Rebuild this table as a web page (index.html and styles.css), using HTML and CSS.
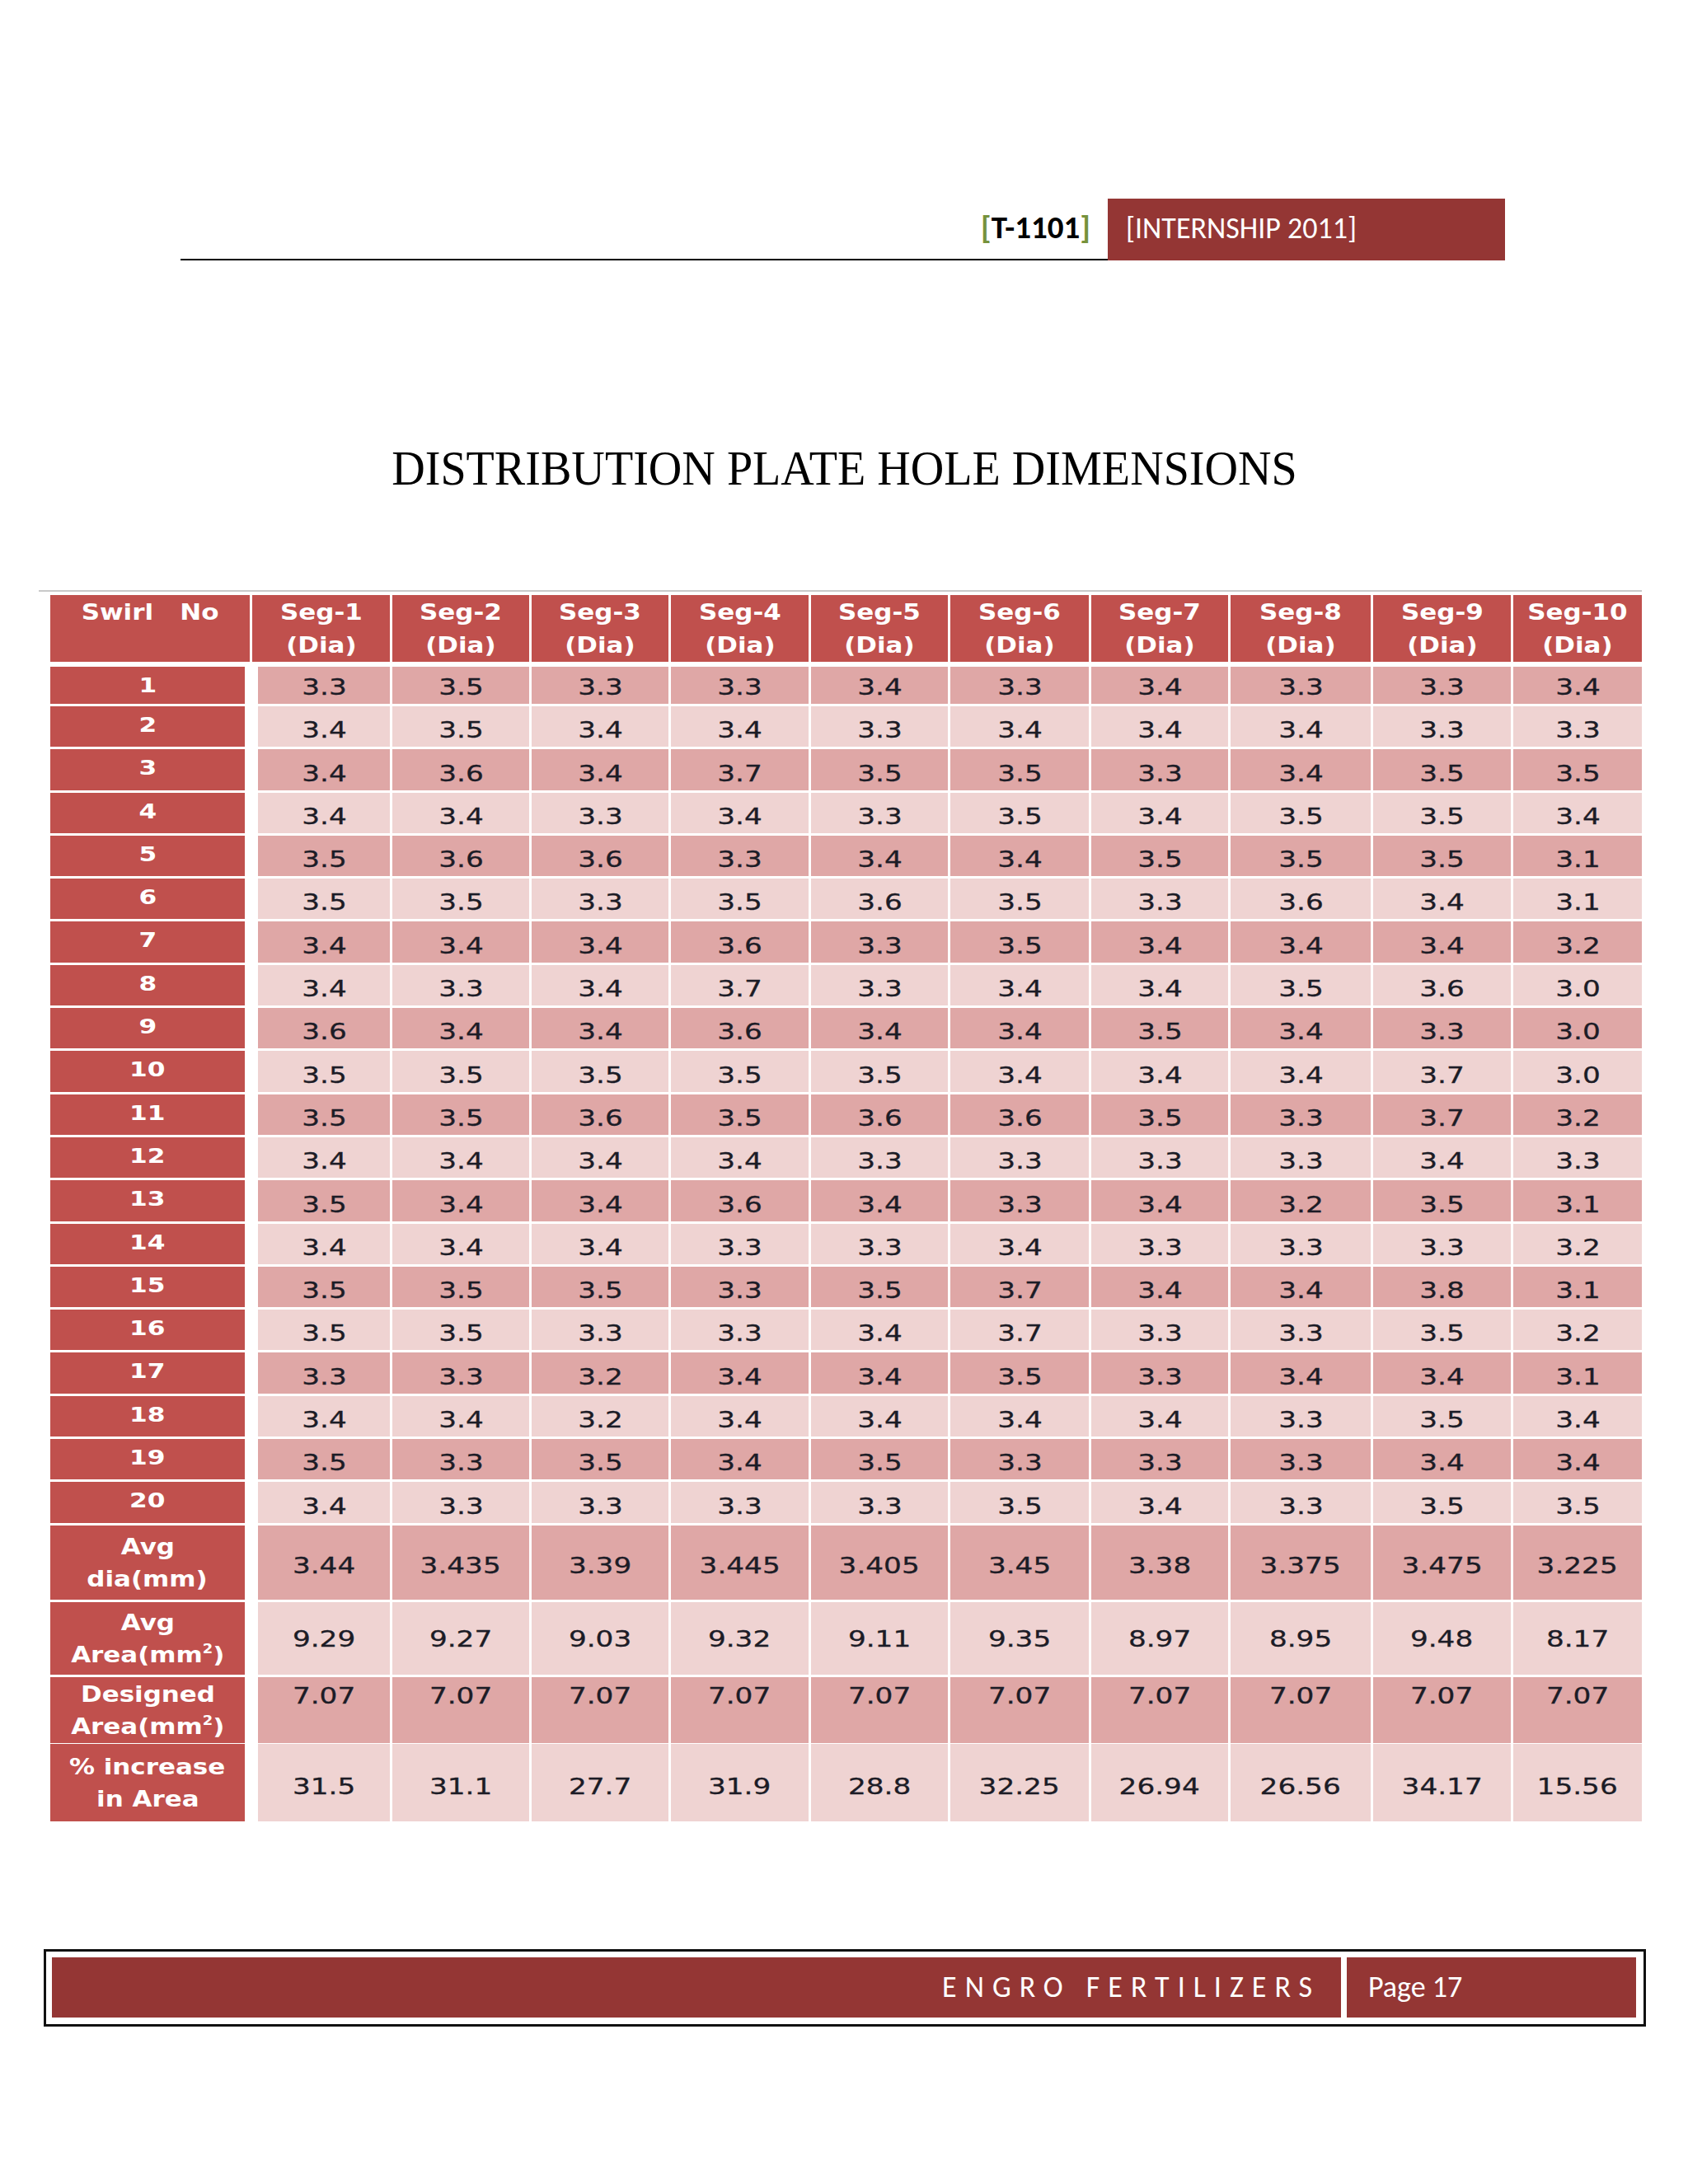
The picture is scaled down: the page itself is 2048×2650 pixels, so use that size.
FILE: index.html
```html
<!DOCTYPE html>
<html>
<head>
<meta charset="utf-8">
<title>Distribution Plate Hole Dimensions</title>
<link rel="stylesheet" href="styles.css">
</head>
<body>
<div class="page">
  <header class="top">
    <div class="top-left"><span class="br">[</span>T-1101<span class="br">]</span></div>
    <div class="top-right">[INTERNSHIP 2011]</div>
  </header>

  <h1 class="title"><span>DISTRIBUTION PLATE HOLE DIMENSIONS</span></h1>

  <section class="tbl">
    <div class="thead">
      <div class="hc"><span class="w">Swirl&nbsp;&nbsp;&nbsp;No</span></div>
      <div class="hc"><span class="w">Seg-1</span><span class="w">(Dia)</span></div>
      <div class="hc"><span class="w">Seg-2</span><span class="w">(Dia)</span></div>
      <div class="hc"><span class="w">Seg-3</span><span class="w">(Dia)</span></div>
      <div class="hc"><span class="w">Seg-4</span><span class="w">(Dia)</span></div>
      <div class="hc"><span class="w">Seg-5</span><span class="w">(Dia)</span></div>
      <div class="hc"><span class="w">Seg-6</span><span class="w">(Dia)</span></div>
      <div class="hc"><span class="w">Seg-7</span><span class="w">(Dia)</span></div>
      <div class="hc"><span class="w">Seg-8</span><span class="w">(Dia)</span></div>
      <div class="hc"><span class="w">Seg-9</span><span class="w">(Dia)</span></div>
      <div class="hc"><span class="w">Seg-10</span><span class="w">(Dia)</span></div>
    </div>

    <div class="tbody">
      <div class="tr r1 dark"><div class="sw"><span class="n">1</span></div><div class="d"><span class="v">3.3</span></div><div class="d"><span class="v">3.5</span></div><div class="d"><span class="v">3.3</span></div><div class="d"><span class="v">3.3</span></div><div class="d"><span class="v">3.4</span></div><div class="d"><span class="v">3.3</span></div><div class="d"><span class="v">3.4</span></div><div class="d"><span class="v">3.3</span></div><div class="d"><span class="v">3.3</span></div><div class="d"><span class="v">3.4</span></div></div>
      <div class="tr light"><div class="sw"><span class="n">2</span></div><div class="d"><span class="v">3.4</span></div><div class="d"><span class="v">3.5</span></div><div class="d"><span class="v">3.4</span></div><div class="d"><span class="v">3.4</span></div><div class="d"><span class="v">3.3</span></div><div class="d"><span class="v">3.4</span></div><div class="d"><span class="v">3.4</span></div><div class="d"><span class="v">3.4</span></div><div class="d"><span class="v">3.3</span></div><div class="d"><span class="v">3.3</span></div></div>
      <div class="tr dark"><div class="sw"><span class="n">3</span></div><div class="d"><span class="v">3.4</span></div><div class="d"><span class="v">3.6</span></div><div class="d"><span class="v">3.4</span></div><div class="d"><span class="v">3.7</span></div><div class="d"><span class="v">3.5</span></div><div class="d"><span class="v">3.5</span></div><div class="d"><span class="v">3.3</span></div><div class="d"><span class="v">3.4</span></div><div class="d"><span class="v">3.5</span></div><div class="d"><span class="v">3.5</span></div></div>
      <div class="tr light"><div class="sw"><span class="n">4</span></div><div class="d"><span class="v">3.4</span></div><div class="d"><span class="v">3.4</span></div><div class="d"><span class="v">3.3</span></div><div class="d"><span class="v">3.4</span></div><div class="d"><span class="v">3.3</span></div><div class="d"><span class="v">3.5</span></div><div class="d"><span class="v">3.4</span></div><div class="d"><span class="v">3.5</span></div><div class="d"><span class="v">3.5</span></div><div class="d"><span class="v">3.4</span></div></div>
      <div class="tr dark"><div class="sw"><span class="n">5</span></div><div class="d"><span class="v">3.5</span></div><div class="d"><span class="v">3.6</span></div><div class="d"><span class="v">3.6</span></div><div class="d"><span class="v">3.3</span></div><div class="d"><span class="v">3.4</span></div><div class="d"><span class="v">3.4</span></div><div class="d"><span class="v">3.5</span></div><div class="d"><span class="v">3.5</span></div><div class="d"><span class="v">3.5</span></div><div class="d"><span class="v">3.1</span></div></div>
      <div class="tr light"><div class="sw"><span class="n">6</span></div><div class="d"><span class="v">3.5</span></div><div class="d"><span class="v">3.5</span></div><div class="d"><span class="v">3.3</span></div><div class="d"><span class="v">3.5</span></div><div class="d"><span class="v">3.6</span></div><div class="d"><span class="v">3.5</span></div><div class="d"><span class="v">3.3</span></div><div class="d"><span class="v">3.6</span></div><div class="d"><span class="v">3.4</span></div><div class="d"><span class="v">3.1</span></div></div>
      <div class="tr dark"><div class="sw"><span class="n">7</span></div><div class="d"><span class="v">3.4</span></div><div class="d"><span class="v">3.4</span></div><div class="d"><span class="v">3.4</span></div><div class="d"><span class="v">3.6</span></div><div class="d"><span class="v">3.3</span></div><div class="d"><span class="v">3.5</span></div><div class="d"><span class="v">3.4</span></div><div class="d"><span class="v">3.4</span></div><div class="d"><span class="v">3.4</span></div><div class="d"><span class="v">3.2</span></div></div>
      <div class="tr light"><div class="sw"><span class="n">8</span></div><div class="d"><span class="v">3.4</span></div><div class="d"><span class="v">3.3</span></div><div class="d"><span class="v">3.4</span></div><div class="d"><span class="v">3.7</span></div><div class="d"><span class="v">3.3</span></div><div class="d"><span class="v">3.4</span></div><div class="d"><span class="v">3.4</span></div><div class="d"><span class="v">3.5</span></div><div class="d"><span class="v">3.6</span></div><div class="d"><span class="v">3.0</span></div></div>
      <div class="tr dark"><div class="sw"><span class="n">9</span></div><div class="d"><span class="v">3.6</span></div><div class="d"><span class="v">3.4</span></div><div class="d"><span class="v">3.4</span></div><div class="d"><span class="v">3.6</span></div><div class="d"><span class="v">3.4</span></div><div class="d"><span class="v">3.4</span></div><div class="d"><span class="v">3.5</span></div><div class="d"><span class="v">3.4</span></div><div class="d"><span class="v">3.3</span></div><div class="d"><span class="v">3.0</span></div></div>
      <div class="tr light"><div class="sw"><span class="n">10</span></div><div class="d"><span class="v">3.5</span></div><div class="d"><span class="v">3.5</span></div><div class="d"><span class="v">3.5</span></div><div class="d"><span class="v">3.5</span></div><div class="d"><span class="v">3.5</span></div><div class="d"><span class="v">3.4</span></div><div class="d"><span class="v">3.4</span></div><div class="d"><span class="v">3.4</span></div><div class="d"><span class="v">3.7</span></div><div class="d"><span class="v">3.0</span></div></div>
      <div class="tr dark"><div class="sw"><span class="n">11</span></div><div class="d"><span class="v">3.5</span></div><div class="d"><span class="v">3.5</span></div><div class="d"><span class="v">3.6</span></div><div class="d"><span class="v">3.5</span></div><div class="d"><span class="v">3.6</span></div><div class="d"><span class="v">3.6</span></div><div class="d"><span class="v">3.5</span></div><div class="d"><span class="v">3.3</span></div><div class="d"><span class="v">3.7</span></div><div class="d"><span class="v">3.2</span></div></div>
      <div class="tr light"><div class="sw"><span class="n">12</span></div><div class="d"><span class="v">3.4</span></div><div class="d"><span class="v">3.4</span></div><div class="d"><span class="v">3.4</span></div><div class="d"><span class="v">3.4</span></div><div class="d"><span class="v">3.3</span></div><div class="d"><span class="v">3.3</span></div><div class="d"><span class="v">3.3</span></div><div class="d"><span class="v">3.3</span></div><div class="d"><span class="v">3.4</span></div><div class="d"><span class="v">3.3</span></div></div>
      <div class="tr dark"><div class="sw"><span class="n">13</span></div><div class="d"><span class="v">3.5</span></div><div class="d"><span class="v">3.4</span></div><div class="d"><span class="v">3.4</span></div><div class="d"><span class="v">3.6</span></div><div class="d"><span class="v">3.4</span></div><div class="d"><span class="v">3.3</span></div><div class="d"><span class="v">3.4</span></div><div class="d"><span class="v">3.2</span></div><div class="d"><span class="v">3.5</span></div><div class="d"><span class="v">3.1</span></div></div>
      <div class="tr light"><div class="sw"><span class="n">14</span></div><div class="d"><span class="v">3.4</span></div><div class="d"><span class="v">3.4</span></div><div class="d"><span class="v">3.4</span></div><div class="d"><span class="v">3.3</span></div><div class="d"><span class="v">3.3</span></div><div class="d"><span class="v">3.4</span></div><div class="d"><span class="v">3.3</span></div><div class="d"><span class="v">3.3</span></div><div class="d"><span class="v">3.3</span></div><div class="d"><span class="v">3.2</span></div></div>
      <div class="tr dark"><div class="sw"><span class="n">15</span></div><div class="d"><span class="v">3.5</span></div><div class="d"><span class="v">3.5</span></div><div class="d"><span class="v">3.5</span></div><div class="d"><span class="v">3.3</span></div><div class="d"><span class="v">3.5</span></div><div class="d"><span class="v">3.7</span></div><div class="d"><span class="v">3.4</span></div><div class="d"><span class="v">3.4</span></div><div class="d"><span class="v">3.8</span></div><div class="d"><span class="v">3.1</span></div></div>
      <div class="tr light"><div class="sw"><span class="n">16</span></div><div class="d"><span class="v">3.5</span></div><div class="d"><span class="v">3.5</span></div><div class="d"><span class="v">3.3</span></div><div class="d"><span class="v">3.3</span></div><div class="d"><span class="v">3.4</span></div><div class="d"><span class="v">3.7</span></div><div class="d"><span class="v">3.3</span></div><div class="d"><span class="v">3.3</span></div><div class="d"><span class="v">3.5</span></div><div class="d"><span class="v">3.2</span></div></div>
      <div class="tr dark"><div class="sw"><span class="n">17</span></div><div class="d"><span class="v">3.3</span></div><div class="d"><span class="v">3.3</span></div><div class="d"><span class="v">3.2</span></div><div class="d"><span class="v">3.4</span></div><div class="d"><span class="v">3.4</span></div><div class="d"><span class="v">3.5</span></div><div class="d"><span class="v">3.3</span></div><div class="d"><span class="v">3.4</span></div><div class="d"><span class="v">3.4</span></div><div class="d"><span class="v">3.1</span></div></div>
      <div class="tr light"><div class="sw"><span class="n">18</span></div><div class="d"><span class="v">3.4</span></div><div class="d"><span class="v">3.4</span></div><div class="d"><span class="v">3.2</span></div><div class="d"><span class="v">3.4</span></div><div class="d"><span class="v">3.4</span></div><div class="d"><span class="v">3.4</span></div><div class="d"><span class="v">3.4</span></div><div class="d"><span class="v">3.3</span></div><div class="d"><span class="v">3.5</span></div><div class="d"><span class="v">3.4</span></div></div>
      <div class="tr dark"><div class="sw"><span class="n">19</span></div><div class="d"><span class="v">3.5</span></div><div class="d"><span class="v">3.3</span></div><div class="d"><span class="v">3.5</span></div><div class="d"><span class="v">3.4</span></div><div class="d"><span class="v">3.5</span></div><div class="d"><span class="v">3.3</span></div><div class="d"><span class="v">3.3</span></div><div class="d"><span class="v">3.3</span></div><div class="d"><span class="v">3.4</span></div><div class="d"><span class="v">3.4</span></div></div>
      <div class="tr light"><div class="sw"><span class="n">20</span></div><div class="d"><span class="v">3.4</span></div><div class="d"><span class="v">3.3</span></div><div class="d"><span class="v">3.3</span></div><div class="d"><span class="v">3.3</span></div><div class="d"><span class="v">3.3</span></div><div class="d"><span class="v">3.5</span></div><div class="d"><span class="v">3.4</span></div><div class="d"><span class="v">3.3</span></div><div class="d"><span class="v">3.5</span></div><div class="d"><span class="v">3.5</span></div></div>

      <div class="tr avg dark"><div class="sw lab"><span class="w">Avg</span><span class="w">dia(mm)</span></div><div class="d"><span class="v">3.44</span></div><div class="d"><span class="v">3.435</span></div><div class="d"><span class="v">3.39</span></div><div class="d"><span class="v">3.445</span></div><div class="d"><span class="v">3.405</span></div><div class="d"><span class="v">3.45</span></div><div class="d"><span class="v">3.38</span></div><div class="d"><span class="v">3.375</span></div><div class="d"><span class="v">3.475</span></div><div class="d"><span class="v">3.225</span></div></div>
      <div class="tr area light"><div class="sw lab"><span class="w">Avg</span><span class="w">Area(mm<sup>2</sup>)</span></div><div class="d"><span class="v">9.29</span></div><div class="d"><span class="v">9.27</span></div><div class="d"><span class="v">9.03</span></div><div class="d"><span class="v">9.32</span></div><div class="d"><span class="v">9.11</span></div><div class="d"><span class="v">9.35</span></div><div class="d"><span class="v">8.97</span></div><div class="d"><span class="v">8.95</span></div><div class="d"><span class="v">9.48</span></div><div class="d"><span class="v">8.17</span></div></div>
      <div class="tr des dark"><div class="sw lab"><span class="w">Designed</span><span class="w">Area(mm<sup>2</sup>)</span></div><div class="d"><span class="v">7.07</span></div><div class="d"><span class="v">7.07</span></div><div class="d"><span class="v">7.07</span></div><div class="d"><span class="v">7.07</span></div><div class="d"><span class="v">7.07</span></div><div class="d"><span class="v">7.07</span></div><div class="d"><span class="v">7.07</span></div><div class="d"><span class="v">7.07</span></div><div class="d"><span class="v">7.07</span></div><div class="d"><span class="v">7.07</span></div></div>
      <div class="tr pct light"><div class="sw lab"><span class="w">% increase</span><span class="w">in Area</span></div><div class="d"><span class="v">31.5</span></div><div class="d"><span class="v">31.1</span></div><div class="d"><span class="v">27.7</span></div><div class="d"><span class="v">31.9</span></div><div class="d"><span class="v">28.8</span></div><div class="d"><span class="v">32.25</span></div><div class="d"><span class="v">26.94</span></div><div class="d"><span class="v">26.56</span></div><div class="d"><span class="v">34.17</span></div><div class="d"><span class="v">15.56</span></div></div>
    </div>
  </section>

  <footer class="foot">
    <div class="fbar fbar1">ENGRO FERTILIZERS</div>
    <div class="fbar fbar2">Page 17</div>
  </footer>
</div>
</body>
</html>
```

FILE: styles.css
```css
* {
  box-sizing: border-box;
}

html,
body {
  margin: 0;
  padding: 0;
  background: #ffffff;
}

body {
  width: 2048px;
  height: 2650px;
  font-family: "Carlito", "Lato", "Liberation Sans", sans-serif;
  overflow: hidden;
}

.page {
  padding-top: 241px;
}

/* ---------- running header ---------- */
.top {
  display: flex;
  margin-left: 219px;
  width: 1607px;
  height: 75px;
}

.top-left {
  flex: 1;
  display: flex;
  justify-content: flex-end;
  align-items: flex-end;
  border-bottom: 2px solid #000;
  padding: 0 21px 18px 0;
  font-weight: 700;
  font-size: 39px;
  line-height: 40px;
  color: #000;
}

.br {
  color: #76923c;
}

.top-right {
  width: 482px;
  display: flex;
  align-items: flex-end;
  padding: 0 0 19px 22px;
  background: #943634;
  color: #fff;
  font-size: 36px;
  line-height: 40px;
}

/* ---------- title ---------- */
.title {
  margin: 222px 0 0;
  text-align: center;
  font-family: "Liberation Serif", serif;
  font-weight: 400;
  font-size: 60px;
  line-height: 60px;
  color: #000;
}

.title span {
  display: inline-block;
  transform: scaleX(0.935);
}

/* ---------- table ---------- */
.tbl {
  margin: 118px 0 0 47px;
  width: 1945px;
  border-top: 2px solid #c9c9c9;
  padding: 4px 0 0 14px;
}

.thead {
  display: grid;
  grid-template-columns: 242px 167px 166px 166px 167px 166px 168px 166px 170px 167px 156px;
  column-gap: 3px;
  height: 77px;
}

.hc {
  display: flex;
  flex-direction: column;
  align-items: center;
  padding-top: 1px;
  background: #c0504d;
  color: #fff;
  font-family: "DejaVu Sans", sans-serif;
  font-weight: 700;
  font-size: 26px;
  line-height: 40px;
}

.w {
  display: inline-block;
  white-space: nowrap;
  transform: scaleX(1.19);
}

.tbody {
  margin-top: 10px;
  display: flex;
  flex-direction: column;
  gap: 3px;
}

.tr {
  display: grid;
  grid-template-columns: 249px 160px 166px 166px 167px 166px 168px 166px 170px 167px 156px;
  column-gap: 3px;
  height: 49.3px;
}

.tr.r1 {
  height: 45px;
}

.tr.avg {
  height: 90px;
}

.tr.area {
  height: 88px;
}

.tr.des {
  height: 78px;
}

.tr.pct {
  height: 94px;
}

.sw {
  width: 236px;
  display: flex;
  justify-content: center;
  align-items: flex-start;
  padding-top: 11px;
  background: #c0504d;
  color: #fff;
  font-family: "DejaVu Sans", sans-serif;
  font-weight: 700;
  font-size: 24px;
  line-height: 24px;
}

.n {
  display: inline-block;
  transform: scaleX(1.3);
}

.sw.lab {
  flex-direction: column;
  align-items: center;
  padding-top: 2px;
  font-size: 26px;
  line-height: 39px;
}

.sw.lab sup {
  font-size: 15px;
  line-height: 0;
  vertical-align: 11px;
}

.d {
  display: flex;
  justify-content: center;
  align-items: flex-end;
  padding-bottom: 7px;
  color: #1c1c26;
  font-family: "DejaVu Sans", sans-serif;
  font-size: 27px;
  line-height: 27px;
  -webkit-text-stroke: 0.3px #1c1c26;
}

.dark .d {
  background: #dfa7a6;
}

.light .d {
  background: #efd3d2;
}

.v {
  display: inline-block;
  transform: scaleX(1.27);
}

.avg .d {
  padding-bottom: 28px;
}

.area .d {
  padding-bottom: 30px;
}

.des .d {
  align-items: flex-start;
  padding-bottom: 0;
  padding-top: 9px;
}

.pct .d {
  padding-bottom: 29px;
}

/* ---------- footer ---------- */
.foot {
  display: flex;
  gap: 7px;
  margin: 155px 0 0 53px;
  width: 1944px;
  height: 94px;
  border: 3px solid #111;
  padding: 7px 9px 8px 7px;
}

.fbar {
  display: flex;
  align-items: center;
  background: #943634;
  color: #fff;
  font-size: 36px;
  line-height: 40px;
}

.fbar1 {
  flex: 1;
  justify-content: flex-end;
  padding-right: 25px;
  letter-spacing: 10px;
}

.fbar2 {
  width: 351px;
  padding-left: 26px;
}
```
